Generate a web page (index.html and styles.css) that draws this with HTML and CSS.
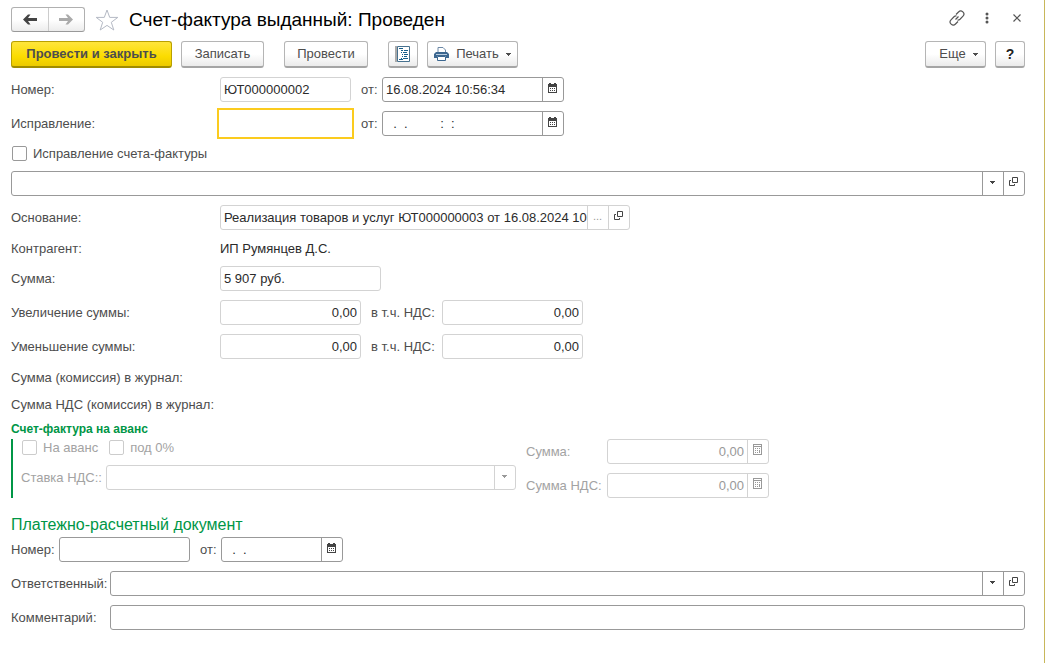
FILE: index.html
```html
<!DOCTYPE html>
<html lang="ru">
<head>
<meta charset="utf-8">
<title>Счет-фактура выданный: Проведен</title>
<link rel="stylesheet" href="styles.css">
</head>
<body>
<svg class="symbols" aria-hidden="true">
  <symbol id="calendar" viewBox="0 0 9 10"><path fill="currentColor" fill-rule="evenodd" d="M0 1h1V0h2v1h3V0h2v1h1v9H0zM1 4v5h7V4z"/><path fill="currentColor" d="M2 5h1v1H2zM4 5h1v1H4zM6 5h1v1H6zM2 7h1v1H2zM4 7h1v1H4zM6 7h1v1H6z"/></symbol>
  <symbol id="calc" viewBox="0 0 9 12"><path fill="currentColor" fill-rule="evenodd" d="M0 0h9v11H0zM1 1v1h7V1zM1 3v7h7V3z"/><path fill="currentColor" d="M2 4h1v1H2zM4 4h1v1H4zM6 4h1v1H6zM2 6h1v1H2zM4 6h1v1H4zM6 6h1v3H6zM2 8h1v1H2zM4 8h1v1H4z"/></symbol>
  <symbol id="open" viewBox="0 0 9 10"><path fill="none" stroke="currentColor" d="M3.500.5h5v5h-5zM2 3.500H.5v5h5V7"/></symbol>
  <symbol id="arrow" viewBox="0 0 5 4"><path fill="currentColor" d="M0 1h5v1H4v1H3v1H2V3H1V2H0z"/></symbol>
</svg>
<main class="window">
  <header class="titlebar">
    <div class="nav">
      <button type="button" aria-label="Назад"><svg width="14" height="11" viewBox="0 0 14 11"><path d="M0 5.500 5 .5h2.500L5 4h9v3H5l2.500 3.500H5z" fill="#444"/></svg></button>
      <button type="button" class="muted" aria-label="Вперед"><svg width="14" height="11" viewBox="0 0 14 11"><path d="M14 5.500 9 .5H6.500L9 4H0v3h9l-2.500 3.500H9z" fill="#aaa"/></svg></button>
    </div>
    <button type="button" class="plain star" aria-label="Избранное"><svg width="24" height="22" viewBox="0 0 24 22"><path d="m12 1 2.700 7.400h8.100l-6.500 4.900 2.500 7.700L12 16.400 5.200 21l2.500-7.700-6.500-4.900h8.100z" fill="none" stroke="#b4b9c4"/></svg></button>
    <h1>Счет-фактура выданный: Проведен</h1>
    <div class="tools">
      <button type="button" class="plain" aria-label="Ссылка"><svg width="16" height="16" viewBox="0 0 16 16" fill="none" stroke="#555" stroke-width="1.200"><path d="M7 4.500 9.500 2a3 3 0 0 1 4.500 4.200L11 9.200a3 3 0 0 1-2.500.8M9 11.500 6.500 14A3 3 0 0 1 2 9.800l3-3A3 3 0 0 1 7.500 6M6.500 9.500l3-3"/></svg></button>
      <button type="button" class="plain" aria-label="Меню"><svg width="4" height="12" viewBox="0 0 4 12" fill="#555"><circle cx="2" cy="2" r="1.500"/><circle cx="2" cy="6" r="1.500"/><circle cx="2" cy="10" r="1.500"/></svg></button>
      <button type="button" class="plain" aria-label="Закрыть"><svg width="8" height="8" viewBox="0 0 8 8"><path d="m.5.5 7 7m0-7-7 7" stroke="#555" stroke-width="1.200"/></svg></button>
    </div>
  </header>

  <div class="commands">
    <button type="button" class="btn primary">Провести и закрыть</button>
    <button type="button" class="btn">Записать</button>
    <button type="button" class="btn post apart">Провести</button>
    <button type="button" class="btn icon apart" aria-label="Движения документа"><svg width="16" height="16" viewBox="0 0 16 16"><path fill="#aaa" d="M0 0h2v16H0z"/><path d="M2.500.5h12v15h-12z" fill="#fff" stroke="#47718f"/><path fill="#17608c" d="M4 2h4v1H4zM6 4h2v1H6zM9 4h4v1H9zM6 6h1v1H6zM8 6h4v1H8zM7 8h1v1H7zM9 8h4v1H9zM7 10h1v1H7zM9 10h3v1H9zM6 12h1v1H6zM8 12h5v1H8zM4 13h4v1H4z"/></svg></button>
    <button type="button" class="btn print"><svg width="15" height="14" viewBox="0 0 15 14"><path d="M4 5V.5h5L11.500 3v2" fill="#fff" stroke="#6c88a6"/><path fill="#3c6790" d="M2 5h11l2 2v4h-3V9H3v2H0V7z"/><path fill="#b9cde0" d="M2 7h11v1H2z"/><path d="M3.500 9.500h8v4h-8z" fill="#fff" stroke="#3c6790"/></svg>Печать<svg width="5" height="4"><use href="#arrow"/></svg></button>
    <button type="button" class="btn push">Еще<svg width="5" height="4"><use href="#arrow"/></svg></button>
    <button type="button" class="btn icon help">?</button>
  </div>

  <form class="form">
    <div class="row">
      <label class="head" for="num">Номер:</label>
      <div class="field light number"><input id="num" value="ЮТ000000002" readonly></div>
      <label class="from" for="date">от:</label>
      <div class="field datetime"><input id="date" value="16.08.2024 10:56:34"><button type="button" aria-label="Календарь"><svg width="9" height="10"><use href="#calendar"/></svg></button></div>
    </div>
    <div class="row">
      <label class="head" for="fix">Исправление:</label>
      <div class="field number active"><input id="fix"></div>
      <label class="from" for="fixdate">от:</label>
      <div class="field datetime"><input id="fixdate" value="  .  .         :  :"><button type="button" aria-label="Календарь"><svg width="9" height="10"><use href="#calendar"/></svg></button></div>
    </div>
    <label class="check"><input type="checkbox">Исправление счета-фактуры</label>
    <div class="field"><select aria-label="Исправляемый счет-фактура"><option></option></select><button type="button" aria-label="Выбрать"><svg width="5" height="4"><use href="#arrow"/></svg></button><button type="button" aria-label="Открыть"><svg width="9" height="10"><use href="#open"/></svg></button></div>
    <div class="row">
      <label class="head" for="base">Основание:</label>
      <div class="field light base"><input id="base" value="Реализация товаров и услуг ЮТ000000003 от 16.08.2024 10:56:34" readonly><button type="button" class="dots">...</button><button type="button" aria-label="Открыть"><svg width="9" height="10"><use href="#open"/></svg></button></div>
    </div>
    <div class="row line"><span class="head">Контрагент:</span><span class="value">ИП Румянцев Д.С.</span></div>
    <div class="row">
      <label class="head" for="sum">Сумма:</label>
      <div class="field light sum"><input id="sum" value="5 907 руб." readonly></div>
    </div>
    <div class="row">
      <label class="head" for="inc">Увеличение суммы:</label>
      <div class="field light amount"><input id="inc" value="0,00" readonly></div>
      <label class="vat" for="incvat">в т.ч. НДС:</label>
      <div class="field light amount"><input id="incvat" value="0,00" readonly></div>
    </div>
    <div class="row">
      <label class="head" for="dec">Уменьшение суммы:</label>
      <div class="field light amount"><input id="dec" value="0,00" readonly></div>
      <label class="vat" for="decvat">в т.ч. НДС:</label>
      <div class="field light amount"><input id="decvat" value="0,00" readonly></div>
    </div>
    <div class="row line">Сумма (комиссия) в журнал:</div>
    <div class="row line">Сумма НДС (комиссия) в журнал:</div>

    <section>
      <h2 class="advance-title">Счет-фактура на аванс</h2>
      <div class="advance">
        <div class="rate">
          <div class="checks">
            <label class="check"><input type="checkbox" disabled>На аванс</label>
            <label class="check"><input type="checkbox" disabled>под 0%</label>
          </div>
          <div class="row">
            <label class="rate-label" for="rate">Ставка НДС::</label>
            <div class="field light rate-field"><select id="rate" disabled><option></option></select><button type="button" disabled aria-label="Выбрать"><svg width="5" height="4"><use href="#arrow"/></svg></button></div>
          </div>
        </div>
        <div class="totals">
          <label for="asum">Сумма:</label>
          <div class="field light amount"><input id="asum" value="0,00" disabled><button type="button" disabled aria-label="Калькулятор"><svg width="9" height="12"><use href="#calc"/></svg></button></div>
          <label for="avat">Сумма НДС:</label>
          <div class="field light amount"><input id="avat" value="0,00" disabled><button type="button" disabled aria-label="Калькулятор"><svg width="9" height="12"><use href="#calc"/></svg></button></div>
        </div>
      </div>
    </section>

    <section class="payment">
      <h2>Платежно-расчетный документ</h2>
      <div class="row">
        <label class="pay-label" for="paynum">Номер:</label>
        <div class="field number"><input id="paynum"></div>
        <label class="from" for="paydate">от:</label>
        <div class="field date"><input id="paydate" value="  .  ."><button type="button" aria-label="Календарь"><svg width="9" height="10"><use href="#calendar"/></svg></button></div>
      </div>
    </section>
    <div class="row">
      <label class="foot" for="resp">Ответственный:</label>
      <div class="field grow"><select id="resp"><option></option></select><button type="button" aria-label="Выбрать"><svg width="5" height="4"><use href="#arrow"/></svg></button><button type="button" aria-label="Открыть"><svg width="9" height="10"><use href="#open"/></svg></button></div>
    </div>
    <div class="row">
      <label class="foot" for="comment">Комментарий:</label>
      <div class="field grow"><input id="comment"></div>
    </div>
  </form>
</main>
</body>
</html>
```
FILE: styles.css
```css
* { box-sizing: border-box; }
body {
  margin: 0;
  background: #fff;
  color: #4d4d4d;
  font: 13px/18px "Liberation Sans", Arial, sans-serif;
}
button, input, select { font: inherit; color: inherit; margin: 0; }
button { padding: 0; }
svg { display: block; flex: none; }
h1, h2 { margin: 0; font-weight: normal; }
.symbols { position: absolute; width: 0; height: 0; }

.window {
  display: flex;
  flex-direction: column;
  gap: 9px;
  min-height: 100vh;
  padding: 7px 19px 20px 11px;
  border-right: 1px solid #c8b75a;
}

.titlebar { display: flex; align-items: center; height: 25px; }
.nav {
  display: flex;
  width: 74px;
  height: 25px;
  border: 1px solid #b0b0b0;
  border-bottom-color: #999;
  border-radius: 3px;
  background: linear-gradient(#fff 50%, #ececec);
}
.nav button {
  flex: 1;
  display: flex;
  align-items: center;
  justify-content: center;
  border: 0;
  background: none;
}
.nav .muted { border-left: 1px solid #ccc; }
.plain { border: 0; background: none; }
.star { margin: 0 10px; }
h1 { color: #000; font-size: 19px; line-height: 24px; }
.tools { display: flex; align-items: center; gap: 20px; height: 22px; margin: 0 0 auto auto; padding-right: 4px; }
.tools .plain:last-child { margin-left: 4px; }

.commands { display: flex; gap: 9px; height: 27px; }
.btn {
  display: flex;
  align-items: center;
  justify-content: center;
  min-width: 83px;
  padding: 0 6px;
  border: 1px solid #b5b5b5;
  border-bottom: 2px solid #a5a5a5;
  border-radius: 3px;
  background: linear-gradient(#fff 50%, #ebebeb);
  gap: 7px;
}
.primary {
  min-width: 161px;
  border-color: #b9a000 #b9a000 #a08c00;
  background: linear-gradient(#ffe53c, #fbdc00 60%, #ecca00);
  font-weight: bold;
}
.post { min-width: 84px; }
.print { min-width: 91px; }
.apart { margin-left: 11px; }
.icon { min-width: 30px; padding: 0; }
.push { min-width: 61px; margin-left: auto; padding-left: 12px; }
.help { color: #222; font-size: 14px; font-weight: bold; }

.form { display: flex; flex-direction: column; gap: 9px; }
.row { display: flex; align-items: center; min-height: 25px; }
.row.line { min-height: 18px; height: 18px; line-height: 16px; padding-top: 2px; }
.head { width: 209px; }
.value { color: #2b2b2b; }
.from { width: 31px; padding-left: 10px; }
.vat { width: 81px; padding-left: 10px; }
.foot { width: 99px; }
.pay-label { width: 48px; }

.field {
  display: flex;
  height: 25px;
  border: 1px solid #999;
  border-radius: 3px;
  background: #fff;
  color: #2b2b2b;
}
.field input, .field select {
  flex: 1;
  min-width: 0;
  padding: 0 3px;
  border: 0;
  outline: 0;
  background: none;
  appearance: none;
  opacity: 1;
}
.field button {
  display: flex;
  align-items: center;
  justify-content: center;
  width: 21px;
  padding: 0 1px 3px 0;
  border: 0;
  border-left: 1px solid #999;
  background: none;
  color: #444;
}
.field.light, .light button { border-color: #d3d3d3; }
.field .dots { color: #999; font-size: 11px; }
.field :disabled { color: #999; }
.field.active { border-color: transparent; border-radius: 0; outline: 2px solid #fbcb1e; outline-offset: 1px; }
.number { width: 131px; }
.datetime { width: 182px; }
.date { width: 122px; }
.base { width: 410px; }
.base input { padding-right: 0; }
.sum { width: 161px; }
.amount { width: 141px; }
.amount input { text-align: right; }
.grow { flex: 1; }

.check { display: flex; align-items: center; height: 17px; gap: 6px; }
.check input {
  width: 15px;
  height: 15px;
  margin-left: 1px;
  border: 1px solid #999;
  border-radius: 2px;
  background: #fff;
  appearance: none;
}
.check input:disabled { border-color: #ccc; }

.advance-title { color: #009646; font-size: 12px; font-weight: bold; line-height: 14px; padding-bottom: 3px; }
.advance {
  display: flex;
  gap: 10px;
  padding-left: 8px;
  border-left: 2px solid #009646;
  color: #a3a3a3;
}
.rate { width: 495px; }
.checks { display: flex; gap: 10px; padding-bottom: 9px; }
.rate-label { width: 85px; }
.rate-field { flex: 1; }
.totals { display: grid; grid-template-columns: 81px 162px; row-gap: 9px; align-items: center; }
.totals .amount { width: auto; }
.payment { padding-top: 8px; }
.payment h2 { color: #009646; font-size: 16px; line-height: 20px; padding-bottom: 2px; }
```
